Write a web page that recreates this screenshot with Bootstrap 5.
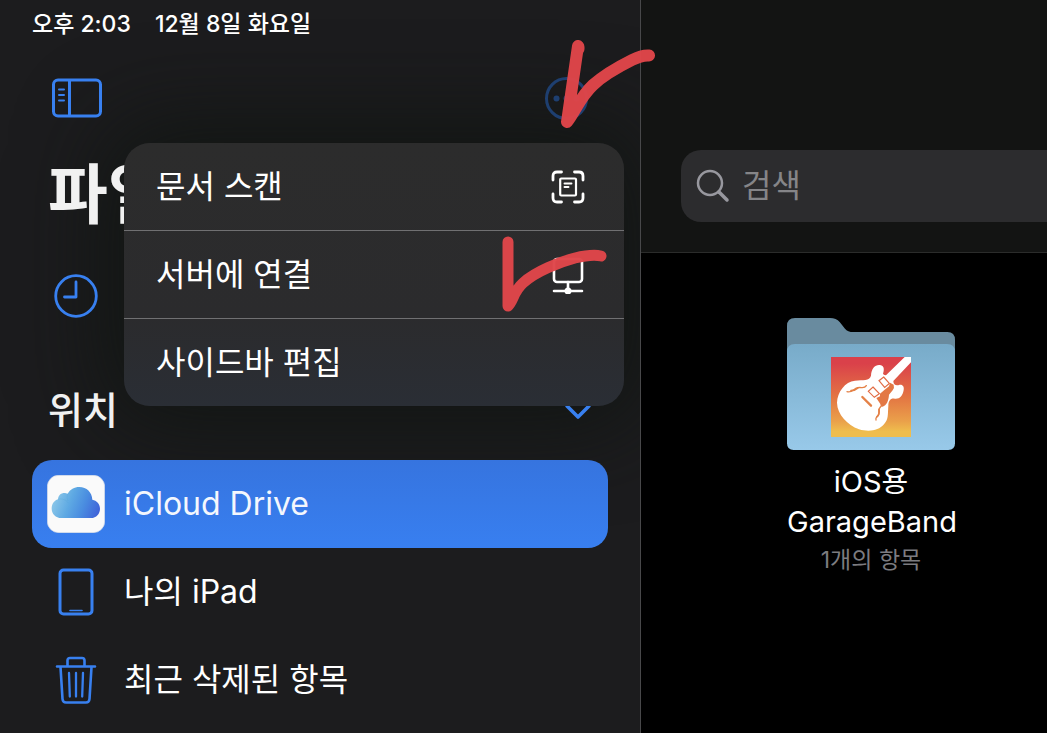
<!DOCTYPE html>
<html lang="ko" data-bs-theme="dark">
<head>
<meta charset="utf-8">
<meta name="viewport" content="width=device-width, initial-scale=1">
<title>파일</title>
<link href="https://cdn.jsdelivr.net/npm/bootstrap@5.3.0/dist/css/bootstrap.min.css" rel="stylesheet">
<style>
  :root { --accent: #3880f0; --row: 88px; }
  body { background: #000; color: #fff; font-family: Inter, "Noto Sans CJK KR", sans-serif; font-size: 32px; line-height: 40px; overflow: hidden; }
  svg { display: block; flex: none; }
  .app-shell { display: grid; grid-template-columns: minmax(0, 641fr) minmax(0, 406fr); min-height: 100vh; }
  .sidebar { background: #1c1c1e; border-right: 1px solid #48484a; z-index: 2; }
  .status-bar { height: 48px; padding: 0 32px; gap: 24px; font-size: 23px; font-weight: 500; }
  .tool-row { height: 100px; padding: 0 52px; }
  .icon-button { background: none; border: 0; padding: 0; color: var(--accent); }
  .page-title { height: 104px; padding: 0 48px 12px; font-size: 65px; line-height: 94px; font-weight: 700; color: #f1f1f1; }
  .side-link { height: var(--row); padding: 0 16px; margin: 0 32px; gap: 20px; border-radius: 20px; color: #fff; text-decoration: none; }
  .side-link.current { background: linear-gradient(#3674df, #387ff0); color: #f4f7fd; }
  .side-icon { width: 56px; display: flex; justify-content: center; color: var(--accent); flex: none; }
  .section-row { height: 120px; padding: 20px 48px 0 48px; }
  .section-name { font-size: 38px; line-height: 48px; font-weight: 500; color: #f1f1f1; }
  .action-menu { position: absolute; top: 143px; right: 16px; width: 500px; border-radius: 26px; overflow: hidden;
    background: linear-gradient(#2c2c2c, #2b2b2d 66%, #2a2e35); }
  .menu-shade { position: absolute; top: 143px; right: 16px; width: 500px; height: 263px; border-radius: 26px; box-shadow: 0 0 90px 16px rgba(15, 20, 17, .85); }
  .shade-clip { position: absolute; inset: 0; overflow: hidden; }
  .sidebar > .layer { position: relative; }
  .menu-entry { height: var(--row); padding: 0 39px 0 32px; background: none; border: 0; color: #fff; text-align: left; }
  .menu-entry + .menu-entry { border-top: 1px solid #707072; }
  .menu-entry:first-child { height: 87px; }
  .pen-marks { position: absolute; top: 30px; right: -20px; pointer-events: none; }
  .main-head { height: 253px; padding: 150px 0 30px 40px; background: #131413; border-bottom: 1px solid #2b2c2b; }
  .search-box { height: 72px; padding-left: 15px; gap: 12px; background: #2c2c2e; border-radius: 20px 0 0 20px; color: #98989f; }
  .search-box input { background: none; border: 0; outline: 0; padding: 0; min-width: 0; flex: 1; color: #fff; }
  .search-box input::placeholder { color: #858588; opacity: 1; }
  .files { padding: 65px 0 0 146px; }
  .file-item { width: 168px; color: #fff; text-decoration: none; font-size: 29px; text-align: center; white-space: nowrap; }
  .file-name { margin-top: 12px; }
  .file-count { font-size: 23px; line-height: 36px; color: #7c7c80; }
</style>
</head>
<body>
<div class="app-shell">
  <aside class="sidebar position-relative">
    <div class="shade-clip"><div class="menu-shade"></div></div>
    <div class="layer">
      <div class="status-bar d-flex align-items-center"><span>오후 2:03</span><span>12월 8일 화요일</span></div>
      <div class="tool-row d-flex align-items-center justify-content-between">
        <button class="icon-button" type="button" aria-label="사이드바">
          <svg width="50" height="40" viewBox="0 0 50 40" fill="none" stroke="currentColor" stroke-width="3"><rect x="1.5" y="2" width="47" height="36" rx="4.500"/><path d="M17.500 2v36"/><path d="M7 11.500h5M7 17h5M7 22.500h5" stroke-width="2" stroke-linecap="round"/></svg>
        </button>
        <button class="icon-button" type="button" aria-label="더 보기">
          <svg width="43" height="43" viewBox="0 0 43 43" fill="none" stroke="#1e3f70" stroke-width="3"><circle cx="21.500" cy="21.500" r="20"/><g fill="#1e3f70" stroke="none"><circle cx="11.500" cy="21.500" r="3"/><circle cx="21.500" cy="21.500" r="3"/><circle cx="31.500" cy="21.500" r="3"/></g></svg>
        </button>
      </div>
      <h1 class="page-title m-0">파일</h1>
      <a class="side-link d-flex align-items-center" href="#" aria-label="최근 항목">
        <span class="side-icon"><svg width="44" height="44" viewBox="0 0 44 44" fill="none" stroke="currentColor" stroke-width="2.800"><circle cx="22" cy="22" r="20.300"/><path d="M22 8v15H10.500" stroke-linecap="round" stroke-linejoin="round"/></svg></span>
      </a>
      <div class="section-row d-flex align-items-center justify-content-between">
        <h2 class="section-name m-0">위치</h2>
        <button class="icon-button" type="button" aria-label="위치 접기">
          <svg width="28" height="20" viewBox="0 0 28 20" fill="none" stroke="currentColor" stroke-width="3.600" stroke-linecap="round" stroke-linejoin="round"><path d="M3 6l11 11L25 6"/></svg>
        </button>
      </div>
      <nav>
        <a class="side-link current d-flex align-items-center" href="#" aria-current="page">
          <span class="side-icon"><svg width="58" height="58" viewBox="0 0 174 174">
            <defs><linearGradient id="cloud" x1="14" y1="60" x2="159" y2="115" gradientUnits="userSpaceOnUse"><stop offset="0" stop-color="#94cdea"/><stop offset=".38" stop-color="#5ea9e3"/><stop offset=".65" stop-color="#4a8de0"/><stop offset="1" stop-color="#3e5fd8"/></linearGradient></defs>
            <rect x="1" y="1" width="172" height="172" rx="34" fill="#fafafa" stroke="#d5dbe6" stroke-width="2"/>
            <path d="M43 129C26 129 14 116 14 101C14 87 22 76 33 73C34 59 44 53 54 54L62 56C69 43 82 36 97 36C119 36 135 52 136 74C149 76 159 87 159 101C159 116 148 129 132 129Z" fill="url(#cloud)"/>
            <path d="M33 73c12-4 25 2 32 12M62 56c-2 8-2 15 1 22" fill="none" stroke="#4e9fcf" stroke-opacity=".35" stroke-width="2"/>
          </svg></span><span>iCloud Drive</span></a>
        <a class="side-link d-flex align-items-center" href="#">
          <span class="side-icon"><svg width="36" height="48" viewBox="0 0 36 48" fill="none" stroke="currentColor" stroke-width="3"><rect x="2" y="2" width="32" height="44" rx="3.500"/><path d="M12 42.500h12" stroke-width="1.600" stroke-linecap="round"/></svg></span><span>나의 iPad</span></a>
        <a class="side-link d-flex align-items-center" href="#">
          <span class="side-icon"><svg width="42" height="48" viewBox="0 0 42 48" fill="none" stroke="currentColor" stroke-width="2.600" stroke-linecap="round" stroke-linejoin="round"><path d="M2 10.500h38M12.500 10V4.500Q12.500 2 15 2h12Q29.500 2 29.500 4.500V10M5.500 11l2 32Q7.800 46.500 11 46.500h20Q34.200 46.500 34.500 43l2-32"/><path d="M14 17l.8 23.500M21 17v23.500M28 17l-.8 23.500" stroke-width="2.300"/></svg></span><span>최근 삭제된 항목</span></a>
      </nav>
    </div>

    <div class="action-menu d-flex flex-column">
      <button class="menu-entry d-flex align-items-center justify-content-between" type="button"><span>문서 스캔</span>
        <svg width="34" height="34" viewBox="0 0 34 34" fill="none" stroke="#fff" stroke-width="2.800" stroke-linecap="round"><path d="M2 10V6Q2 2 6 2h4.500M23.500 2H28Q32 2 32 6v4M32 24v4Q32 32 28 32h-4.500M10.500 32H6Q2 32 2 28v-4"/><rect x="9.200" y="8.500" width="15.800" height="17" rx="1" stroke-width="2.200"/><path d="M13.500 13.500h7M13.500 17h4" stroke-width="1.900"/></svg></button>
      <button class="menu-entry d-flex align-items-center justify-content-between" type="button"><span>서버에 연결</span>
        <svg width="34" height="38" viewBox="0 0 34 38" fill="none" stroke="#fff" stroke-width="2.600" stroke-linecap="round"><rect x="3" y="3" width="28" height="23" rx="3"/><path d="M17 26v9M3 35h28"/><circle cx="17" cy="35" r="3.500" fill="#fff" stroke="none"/></svg></button>
      <button class="menu-entry d-flex align-items-center justify-content-between" type="button"><span>사이드바 편집</span></button>
    </div>

    <svg class="pen-marks" width="180" height="290" viewBox="480 30 180 290" fill="none" stroke="#e0464a" stroke-linecap="round" stroke-linejoin="round" opacity=".97" aria-hidden="true">
      <path d="M578 46L567 122C575 112 580 97 593 85C606 73 622 65 632 60Q642 55 649 55.500" stroke-width="12"/>
      <path d="M579 47v2" stroke-width="11"/>
      <path d="M508 242L508 306C514 300 513 292 523 283C536 271 560 262 575 258Q592 254 601 256" stroke-width="11"/>
    </svg>
  </aside>

  <main>
    <div class="main-head">
      <label class="search-box d-flex align-items-center">
        <svg width="34" height="34" viewBox="0 0 34 34" fill="none" stroke="currentColor" stroke-linecap="round"><circle cx="14" cy="14" r="12" stroke-width="2.500"/><path d="M23 23l8 8" stroke-width="3.500"/></svg>
        <input type="search" placeholder="검색" aria-label="검색">
      </label>
    </div>
    <div class="files">
      <a class="file-item d-block" href="#">
        <svg width="168" height="132" viewBox="51 54 504 396">
          <defs>
            <linearGradient id="front" x2="0" y2="1"><stop stop-color="#78abc9"/><stop offset="1" stop-color="#98c9e9"/></linearGradient>
            <linearGradient id="flame" x2="0" y2="1"><stop offset=".08" stop-color="#da414a"/><stop offset=".5" stop-color="#e37543"/><stop offset=".8" stop-color="#eaa04a"/><stop offset=".93" stop-color="#efbd4d"/></linearGradient>
          </defs>
          <path d="M51 160V78Q51 54 75 54H180Q199 54 209 66L225 86Q233 96 250 96H532Q555 96 555 120V160Z" fill="#698b9f"/>
          <path d="M51 156Q51 132 75 132H531Q555 132 555 156V430Q555 450 535 450H71Q51 450 51 430Z" fill="url(#front)"/>
          <path d="M183 171h240v240H183z" fill="url(#flame)"/>
          <path d="M303 227C304 205 316 193 330 195C345 198 342 211 339 222Q343 226 348 226L404 171H423V187L370 243C370 256 380 258 389 254C399 253 403 261 401 270C398 288 388 298 374 296C362 294 355 302 355 318C353 344 356 357 342 373C326 392 297 397 267 388C232 374 202 344 201 308C202 276 225 245 255 242C280 239 298 243 303 227Z" fill="#fff"/>
          <path d="M360 248L371 254Q374 263 368 271L357 284C356 303 349 316 338 320Q331 320 331 312L319 294L330 289V281L343 270L357 259Z" fill="#e37845"/>
          <g fill="#fff" stroke="#e26b43" stroke-width="3.500"><path d="M341 231L358 250L344 262L327 242ZM309 261L328 281L313 292L295 274Z"/></g>
          <g fill="none" stroke="#e48147" stroke-linecap="round"><path d="M277 291L303 317" stroke-width="7"/><path d="M231 275C246 280 250 266 263 263C276 261 283 267 289 257" stroke-width="4"/><path d="M334 318C322 327 329 336 326 344C323 352 315 350 318 360" stroke-width="4"/><path d="M243 272Q257 271 264 264M327 328Q329 343 321 350" stroke-width="5"/></g>
        </svg>
        <div class="file-name">iOS용<br>GarageBand</div>
        <div class="file-count">1개의 항목</div>
      </a>
    </div>
  </main>
</div>
<script src="https://cdn.jsdelivr.net/npm/bootstrap@5.3.0/dist/js/bootstrap.bundle.min.js"></script>
</body>
</html>
